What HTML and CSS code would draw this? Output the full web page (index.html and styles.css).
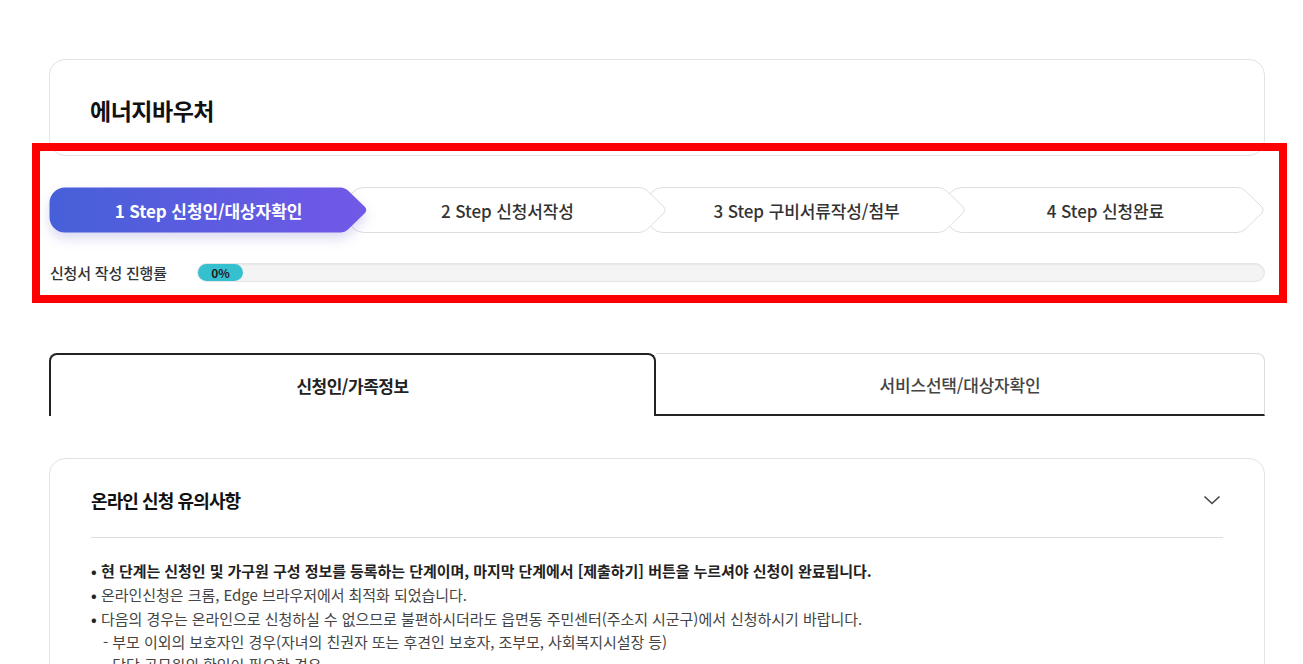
FILE: index.html
```html
<!DOCTYPE html>
<html lang="ko">

<head>
    <meta charset="UTF-8">
    <meta name="viewport" content="width=device-width, initial-scale=1.0">
    <title>에너지바우처</title>
    <link rel="stylesheet" href="styles.css">
</head>

<body>
    <div class="container">
        <div class="titleCard">
            <h2>에너지바우처</h2>
        </div>

        <div class="steps">
            <div class="stepList">
                <div class="step on">
                    <svg class="stepBg" viewBox="0 0 319 46" width="319" height="46">
                        <defs>
                            <linearGradient id="stepGrad" x1="0" y1="0" x2="1" y2="0">
                                <stop offset="0" stop-color="#4660d8" />
                                <stop offset="1" stop-color="#7258e8" />
                            </linearGradient>
                        </defs>
                        <path d="M16 0.5 H291 Q296 0.5 299.5 4 L316 20 Q318.5 23 316 26 L299.5 42 Q296 45.5 291 45.5 H16 A15.5 15.5 0 0 1 0.5 30 V16 A15.5 15.5 0 0 1 16 0.5 Z" fill="url(#stepGrad)" />
                    </svg>
                    <span>1 Step 신청인/대상자확인</span>
                </div>
                <div class="step">
                    <svg class="stepBg" viewBox="0 0 319 46" width="319" height="46">
                        <path d="M16 0.5 H291 Q296 0.5 299.5 4 L316 20 Q318.5 23 316 26 L299.5 42 Q296 45.5 291 45.5 H16 A15.5 15.5 0 0 1 0.5 30 V16 A15.5 15.5 0 0 1 16 0.5 Z" fill="#fff" stroke="#dedede" />
                    </svg>
                    <span>2 Step 신청서작성</span>
                </div>
                <div class="step">
                    <svg class="stepBg" viewBox="0 0 319 46" width="319" height="46">
                        <path d="M16 0.5 H291 Q296 0.5 299.5 4 L316 20 Q318.5 23 316 26 L299.5 42 Q296 45.5 291 45.5 H16 A15.5 15.5 0 0 1 0.5 30 V16 A15.5 15.5 0 0 1 16 0.5 Z" fill="#fff" stroke="#dedede" />
                    </svg>
                    <span>3 Step 구비서류작성/첨부</span>
                </div>
                <div class="step">
                    <svg class="stepBg" viewBox="0 0 319 46" width="319" height="46">
                        <path d="M16 0.5 H291 Q296 0.5 299.5 4 L316 20 Q318.5 23 316 26 L299.5 42 Q296 45.5 291 45.5 H16 A15.5 15.5 0 0 1 0.5 30 V16 A15.5 15.5 0 0 1 16 0.5 Z" fill="#fff" stroke="#dedede" />
                    </svg>
                    <span>4 Step 신청완료</span>
                </div>
            </div>

            <div class="progress">
                <span class="progressLabel">신청서 작성 진행률</span>
                <div class="progressBar">
                    <div class="progressFill">0%</div>
                </div>
            </div>
        </div>

        <div class="tabs">
            <div class="tab on">신청인/가족정보</div>
            <div class="tab">서비스선택/대상자확인</div>
        </div>

        <div class="notice">
            <div class="noticeHead">
                <h3>온라인 신청 유의사항</h3>
                <svg class="arrow" width="18" height="10" viewBox="0 0 18 10">
                    <path d="M1.5 1.5 L9 8.5 L16.5 1.5" fill="none" stroke="#444" stroke-width="1.6" />
                </svg>
            </div>
            <ul class="noticeList">
                <li class="strong">현 단계는 신청인 및 가구원 구성 정보를 등록하는 단계이며, 마지막 단계에서 [제출하기] 버튼을 누르셔야 신청이 완료됩니다.</li>
                <li>온라인신청은 크롬, Edge 브라우저에서 최적화 되었습니다.</li>
                <li>다음의 경우는 온라인으로 신청하실 수 없으므로 불편하시더라도 읍면동 주민센터(주소지 시군구)에서 신청하시기 바랍니다.
                    <p class="sub">- 부모 이외의 보호자인 경우(자녀의 친권자 또는 후견인 보호자, 조부모, 사회복지시설장 등)</p>
                    <p class="sub">- 담당 공무원의 확인이 필요한 경우</p>
                </li>
            </ul>
        </div>
    </div>
</body>

</html>
```

FILE: styles.css
```css
*,
*::before,
*::after {
    box-sizing: border-box;
}

body {
    margin: 0;
    background-color: #fff;
    font-family: "Noto Sans CJK KR", "Noto Sans", sans-serif;
    color: #222;
}

.container {
    width: 1216px;
    margin-left: 49px;
    padding-top: 59px;
}

.titleCard {
    height: 97px;
    border: 1px solid #e3e3e3;
    border-radius: 16px;
    padding: 4px 40px 0;
    display: flex;
    align-items: center;
}

.titleCard h2 {
    margin: 0;
    font-size: 23px;
    font-weight: 700;
    letter-spacing: -0.5px;
    color: #111;
}

/* step bar */
.steps {
    position: relative;
    margin-top: 31px;
}

.steps::after {
    content: '';
    position: absolute;
    left: -17px;
    top: -44px;
    width: 1255px;
    height: 160px;
    border: 8px solid #ff0000;
    pointer-events: none;
    z-index: 10;
}

.stepList {
    display: flex;
}

.step {
    position: relative;
    width: 319px;
    height: 46px;
    flex-shrink: 0;
    display: flex;
    align-items: center;
    justify-content: center;
    margin-left: -20px;
    font-size: 17px;
    font-weight: 500;
    letter-spacing: -0.1px;
    color: #333;
}

.step:first-child {
    margin-left: 0;
}

.step:nth-child(1) { z-index: 4; }
.step:nth-child(2) { z-index: 3; }
.step:nth-child(3) { z-index: 2; }
.step:nth-child(4) { z-index: 1; }

.stepBg {
    position: absolute;
    left: 0;
    top: 0;
}

.step span {
    position: relative;
}

.step.on {
    color: #fff;
    font-weight: 700;
}

.step.on .stepBg {
    filter: drop-shadow(0 6px 6px rgba(90, 80, 200, 0.22));
}

.progress {
    display: flex;
    align-items: center;
    margin-top: 30px;
}

.progressLabel {
    width: 148px;
    flex-shrink: 0;
    padding-left: 1px;
    font-size: 15px;
    line-height: 19px;
    font-weight: 500;
    letter-spacing: -0.2px;
    color: #333;
}

.progressBar {
    flex: 1;
    height: 19px;
    border: 1px solid #e5e5e5;
    border-radius: 10px;
    background-color: #f4f4f4;
    box-shadow: inset 0 1px 2px rgba(0, 0, 0, 0.06);
}

.progressFill {
    width: 45px;
    height: 17px;
    border-radius: 9px;
    background-color: #35c0d0;
    font-size: 12px;
    font-weight: 700;
    line-height: 17px;
    text-align: center;
    color: #222;
}

/* tabs */
.tabs {
    display: flex;
    margin-top: 71px;
}

.tab {
    height: 63px;
    display: flex;
    align-items: center;
    justify-content: center;
    font-size: 17px;
    letter-spacing: -0.5px;
}

.tab.on {
    width: 607px;
    border: 2px solid #222;
    border-bottom: none;
    border-radius: 8px 8px 0 0;
    font-weight: 700;
    color: #222;
}

.tab:not(.on) {
    flex: 1;
    border-top: 1px solid #dcdcdc;
    border-right: 1px solid #dcdcdc;
    border-bottom: 2px solid #222;
    border-radius: 0 8px 0 0;
    font-weight: 500;
    letter-spacing: -0.2px;
    color: #444;
    padding-top: 1px;
}

/* notice */
.notice {
    margin-top: 42px;
    border: 1px solid #e3e3e3;
    border-radius: 16px;
    padding: 0 41px;
    height: 240px;
}

.noticeHead {
    height: 79px;
    padding-top: 4px;
    display: flex;
    align-items: center;
    justify-content: space-between;
    border-bottom: 1px solid #dddddd;
}

.noticeHead h3 {
    margin: 0;
    font-size: 18px;
    font-weight: 700;
    letter-spacing: -0.9px;
    color: #111;
}

.arrow {
    margin-right: 2px;
}

.noticeList {
    list-style: none;
    margin: 0;
    padding: 21px 0 0;
    font-size: 15px;
    line-height: 23px;
    letter-spacing: -0.05px;
    color: #444;
}

.noticeList li {
    padding-left: 10px;
    text-indent: -10px;
}

.noticeList li + li {
    margin-top: 1px;
}

.noticeList li::before {
    content: '•';
    display: inline-block;
    width: 10px;
    text-indent: 0;
    font-weight: 700;
    color: #222;
}

.noticeList li.strong {
    font-weight: 700;
    color: #222;
}

.noticeList .sub {
    margin: 0;
    text-indent: 0;
    padding-left: 2px;
}
```
